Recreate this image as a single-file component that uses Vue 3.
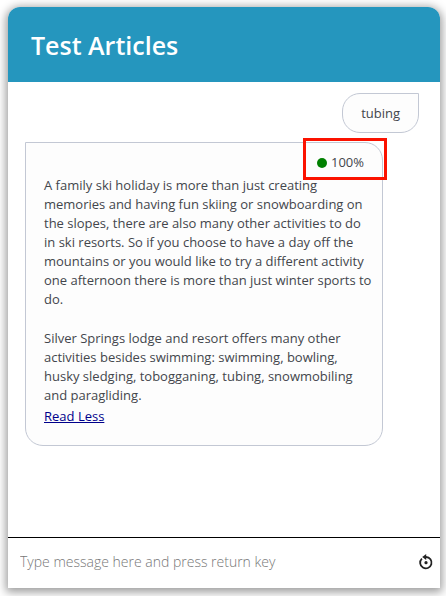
<script setup>
import { ref } from 'vue'

const title = 'Test Articles'
const question = 'tubing'
const score = 100
const paragraphs = [
  'A family ski holiday is more than just creating memories and having fun skiing or snowboarding on the slopes, there are also many other activities to do in ski resorts. So if you choose to have a day off the mountains or you would like to try a different activity one afternoon there is more than just winter sports to do.',
  'Silver Springs lodge and resort offers many other activities besides swimming: swimming, bowling, husky sledging, tobogganing, tubing, snowmobiling and paragliding.'
]
const expanded = ref(true)
const draft = ref('')
</script>

<template>
  <main class="chat">
    <header class="chat-header">
      <h1>{{ title }}</h1>
    </header>

    <section class="messages">
      <div class="bubble user">{{ question }}</div>
      <article class="bubble bot">
        <div class="score">
          <span class="dot"></span>
          <span>{{ score }}%</span>
          <span class="highlight"></span>
        </div>
        <p v-for="(text, i) in expanded ? paragraphs : paragraphs.slice(0, 1)" :key="i">{{ text }}</p>
        <a href="#" @click.prevent="expanded = !expanded">{{ expanded ? 'Read Less' : 'Read More' }}</a>
      </article>
    </section>

    <form class="composer" @submit.prevent="draft = ''">
      <input v-model="draft" type="text" aria-label="Message" placeholder="Type message here and press return key" />
      <button type="button" aria-label="Restart conversation" @click="draft = ''">
        <svg viewBox="0 0 16 18" width="16" height="18" aria-hidden="true">
          <path d="M3.9 5.6A5.7 5.7 0 1 0 8 4H6" fill="none" stroke="#222" stroke-width="1.8" />
          <path d="M8.2 1V7L4.2 4z" fill="#222" />
          <circle cx="8" cy="9.7" r="1.6" fill="#222" />
        </svg>
      </button>
    </form>
  </main>
</template>

<style>
body {
  margin: 0;
  background: #fff;
}
</style>

<style scoped>
.chat {
  box-sizing: border-box;
  display: flex;
  flex-direction: column;
  min-height: calc(100vh - 15px);
  margin: 7px 6px 8px 8px;
  border-radius: 12px 12px 0 0;
  background: #fff;
  box-shadow: 0 2px 10px 2px rgba(0, 0, 0, 0.4);
  font-family: "Open Sans", "Noto Sans", sans-serif;
  font-size: 13px;
  line-height: 19px;
  color: #43464c;
}

.chat-header {
  padding: 20px 23px 19px;
  border-radius: 12px 12px 0 0;
  background: #2596be;
}

h1 {
  margin: 0;
  font-size: 25px;
  font-weight: 600;
  line-height: 36px;
  color: #fff;
}

.messages {
  display: flex;
  flex: 1;
  flex-direction: column;
  gap: 9px;
  padding: 11px 21px 20px 17px;
}

.bubble {
  box-sizing: border-box;
  border: 1px solid #c3c8d4;
  background: #fdfdfd;
}

.user {
  align-self: flex-end;
  padding: 10px 18px 9px;
  border-radius: 18px 0 18px 18px;
}

.bot {
  margin-right: 36px;
  padding: 10px 8px 19px 18px;
  border-radius: 0 18px 18px 18px;
}

.score {
  position: relative;
  display: flex;
  align-items: center;
  justify-content: flex-end;
  gap: 4px;
  margin: 0 10px 4px 0;
}

.dot {
  width: 10px;
  height: 10px;
  border-radius: 50%;
  background: #008000;
}

.highlight {
  position: absolute;
  top: -15px;
  right: -23px;
  width: 78px;
  height: 36px;
  border: 3px solid #fb1200;
}

p {
  margin: 0 0 20px;
}

p:last-of-type {
  margin-bottom: 2px;
}

a {
  color: #00008b;
}

.composer {
  display: flex;
  align-items: center;
  height: 47px;
  padding: 0 6px 3px 12px;
  border-top: 1px solid #000;
}

input {
  flex: 1;
  min-width: 0;
  padding: 0;
  border: 0;
  outline: 0;
  background: transparent;
  font-family: inherit;
  font-size: 14px;
  font-weight: 300;
  line-height: 20px;
  color: #43464c;
}

input::placeholder {
  color: #777;
  opacity: 1;
}

button {
  display: flex;
  padding: 0;
  border: 0;
  background: none;
  cursor: pointer;
}
</style>
